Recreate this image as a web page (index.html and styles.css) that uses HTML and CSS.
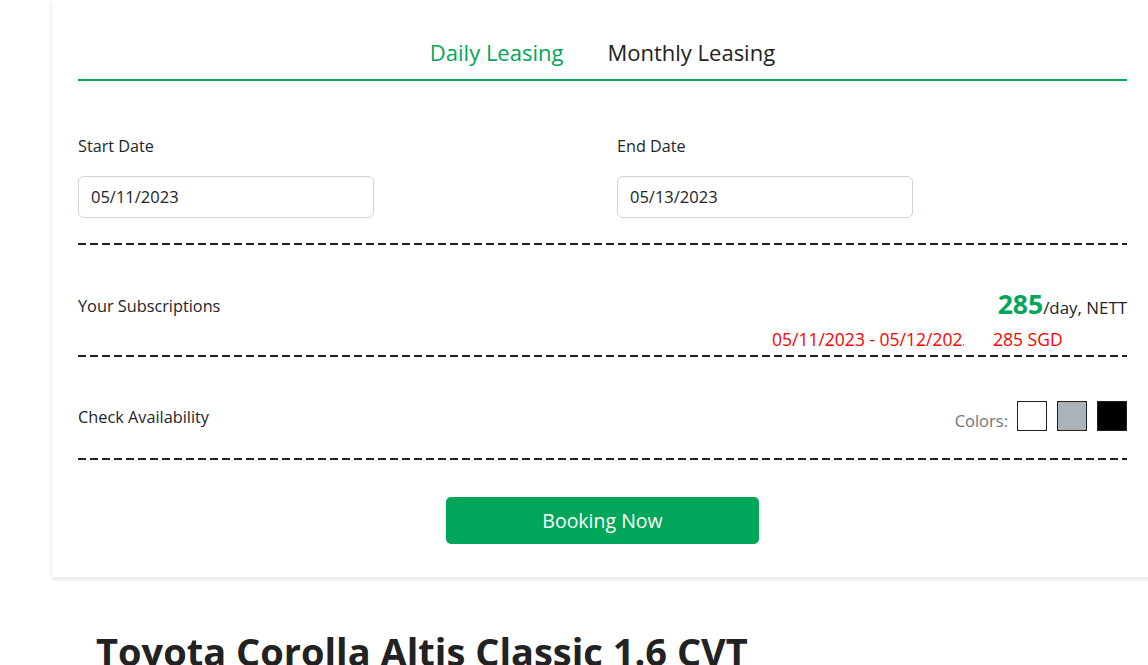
FILE: index.html
```html
<!DOCTYPE html>
<html lang="en">
<head>
<meta charset="utf-8">
<title>Leasing</title>
<link rel="stylesheet" href="styles.css">
</head>
<body>
<div class="card">
  <div class="tabs">
    <div class="tab active">Daily Leasing</div>
    <div class="tab">Monthly Leasing</div>
  </div>
  <div class="dates">
    <div class="field">
      <div class="label">Start Date</div>
      <div class="input">05/11/2023</div>
    </div>
    <div class="field">
      <div class="label">End Date</div>
      <div class="input">05/13/2023</div>
    </div>
  </div>
  <div class="dash"></div>
  <div class="row subs">
    <div class="row-label">Your Subscriptions</div>
    <div class="price-col">
      <div class="price"><span class="amount">285</span>/day, NETT</div>
      <div class="breakdown">
        <span class="range">05/11/2023 - 05/12/2023</span>
        <span class="sum">285 SGD</span>
      </div>
    </div>
  </div>
  <div class="dash"></div>
  <div class="row avail">
    <div class="row-label avail-label">Check Availability</div>
    <div class="colors">
      <span class="colors-label">Colors:</span>
      <span class="swatch white"></span>
      <span class="swatch grey"></span>
      <span class="swatch black"></span>
    </div>
  </div>
  <div class="dash"></div>
  <div class="actions">
    <button class="book">Booking Now</button>
  </div>
</div>
<h1 class="title">Toyota Corolla Altis Classic 1.6 CVT</h1>
</body>
</html>
```

FILE: styles.css
```css
html, body {
  margin: 0;
  padding: 0;
  overflow: hidden;
  background: #fff;
}
body {
  font-family: "Open Sans", "Noto Sans", sans-serif;
  color: #212529;
  width: 1148px;
  height: 665px;
}
.card {
  margin-left: 52px;
  width: 1101px;
  background: #fff;
  box-shadow: 0 2px 5px rgba(0, 0, 0, 0.12);
  padding: 0 26px 33px;
  box-sizing: border-box;
}
.tabs {
  display: flex;
  justify-content: center;
  border-bottom: 2px solid #00a65a;
  height: 79px;
  align-items: flex-end;
}
.tab {
  font-size: 22px;
  line-height: 30px;
  padding: 0 22px 12px;
  color: #222;
  font-weight: 500;
}
.tab.active {
  color: #00a65a;
}
.dates {
  display: grid;
  grid-template-columns: 539px 1fr;
  padding-top: 53px;
  padding-bottom: 25px;
}
.label {
  font-size: 16.2px;
  line-height: 24px;
  margin-bottom: 18px;
}
.input {
  width: 296px;
  height: 42px;
  box-sizing: border-box;
  border: 1px solid #ced4da;
  border-radius: 6px;
  padding: 0 12px;
  font-size: 16.5px;
  line-height: 40px;
}
.dash {
  height: 2px;
  background: repeating-linear-gradient(to right, #222 0 8px, transparent 8px 12px);
}
.row {
  display: flex;
  justify-content: space-between;
  align-items: flex-start;
}
.row-label {
  font-size: 16.3px;
  line-height: 24px;
}
.subs {
  padding-top: 49px;
  padding-bottom: 5px;
  height: 56px;
}
.price-col {
  width: 355px;
  margin-top: -6px;
}
.price {
  text-align: right;
  font-size: 16.9px;
  line-height: 32px;
}
.amount {
  font-size: 26.5px;
  font-weight: 700;
  color: #00a65a;
}
.breakdown {
  display: flex;
  color: #f00;
  font-size: 17.5px;
  line-height: 24px;
  margin-top: 3px;
}
.range {
  width: 192px;
  overflow: hidden;
  white-space: nowrap;
  flex: none;
}
.sum {
  margin-left: 29px;
}
.avail {
  height: 101px;
}
.avail-label {
  margin-top: 48px;
}
.colors {
  display: flex;
  align-items: center;
  gap: 10px;
  margin-top: 42px;
}
.colors-label {
  color: #6c757d;
  font-size: 16.5px;
  margin-right: -1px;
  padding-top: 10px;
}
.swatch {
  width: 30px;
  height: 30px;
  box-sizing: border-box;
  border: 1px solid #222;
}
.swatch.white { background: #fff; }
.swatch.grey { background: #a9b3b8; }
.swatch.black { background: #000; }
.actions {
  display: flex;
  justify-content: center;
  padding-top: 37px;
}
.book {
  width: 313px;
  height: 47px;
  border: none;
  border-radius: 5px;
  background: #00a65a;
  color: #fff;
  font-family: "Open Sans", "Noto Sans", sans-serif;
  font-size: 19.5px;
}
.title {
  margin: 49px 0 0 96px;
  font-size: 38px;
  line-height: 50px;
  font-weight: 700;
  color: #222;
  white-space: nowrap;
}
```
